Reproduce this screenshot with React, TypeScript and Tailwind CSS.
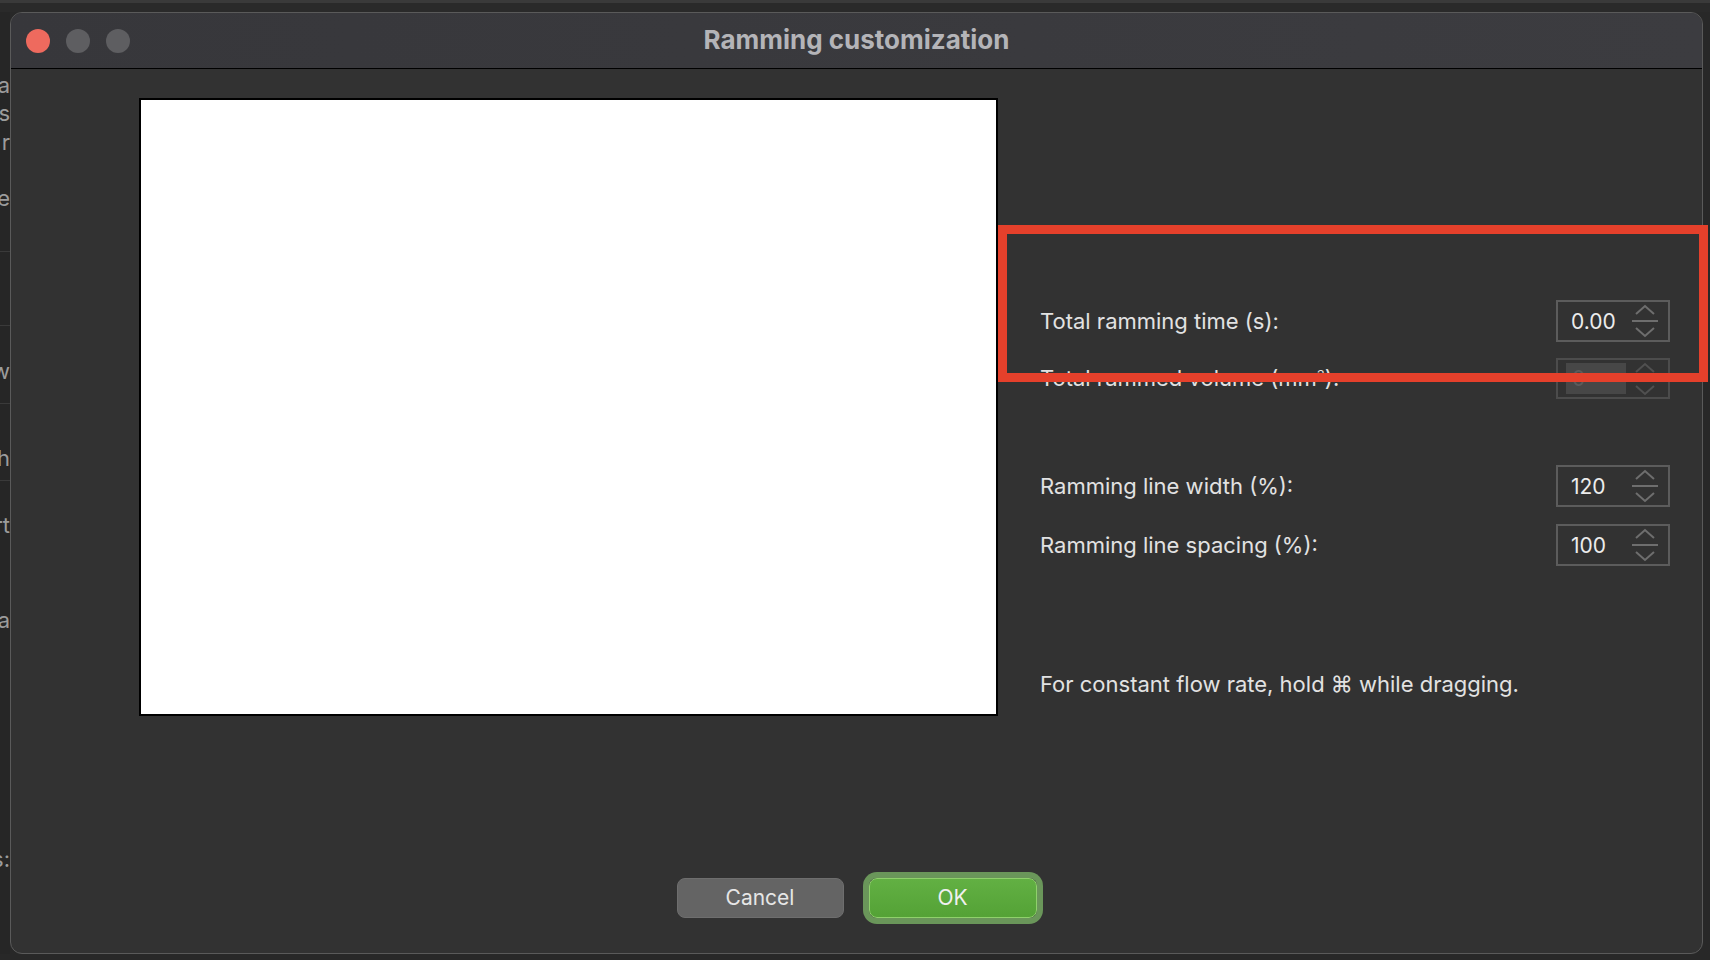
import React from 'react';

const SIDE_FRAGMENTS: { text: string; mt: string; line?: boolean }[] = [
  { text: 'a', mt: 'mt-[59px]' },
  { text: 's', mt: 'mt-0' },
  { text: 'r', mt: 'mt-[1px]' },
  { text: 'e', mt: 'mt-[28px]' },
  { text: '', mt: 'mt-[39px]', line: true },
  { text: '', mt: 'mt-[73px]', line: true },
  { text: 'w', mt: 'mt-[31px]' },
  { text: '', mt: 'mt-[18px]', line: true },
  { text: 'h', mt: 'mt-[40px]' },
  { text: '', mt: 'mt-[8px]', line: true },
  { text: 'rt', mt: 'mt-[30px]' },
  { text: 'ta', mt: 'mt-[67px]' },
  { text: 's:', mt: 'mt-[211px]' },
];

function Chevrons({ dim }: { dim?: boolean }) {
  const c = dim ? '#505050' : '#6e6e6e';
  return (
    <svg width="28" height="36" viewBox="0 0 28 36" fill="none" className="shrink-0">
      <path d="M5 11 L14 3 L23 11" stroke={c} strokeWidth="2" />
      <path d="M1 18 H27" stroke={c} strokeWidth="2" />
      <path d="M5 25 L14 33 L23 25" stroke={c} strokeWidth="2" />
    </svg>
  );
}

function SpinBox({ value, disabled }: { value: string; disabled?: boolean }) {
  if (disabled) {
    return (
      <div className="w-[114px] h-[41px] border-2 border-[#4c4c4c] flex items-center pl-[8px] pr-[9px] justify-between">
        <div className="w-[60px] h-[31px] bg-[#474747] flex items-center pl-[6px] text-[21px] text-[#5c5c5c]">{value}</div>
        <Chevrons dim />
      </div>
    );
  }
  return (
    <div className="w-[114px] h-[42px] border-2 border-[#5c5c5c] flex items-center pl-[13px] pr-[9px] justify-between">
      <span className="text-[21px] text-[#ececec] leading-none">{value}</span>
      <Chevrons />
    </div>
  );
}

function Row({ label, children, mt }: { label: React.ReactNode; children: React.ReactNode; mt: string }) {
  return (
    <div className={`flex items-center justify-between ${mt}`}>
      <span className="text-[22px] text-[#e2e2e2]">{label}</span>
      {children}
    </div>
  );
}

export default function App() {
  return (
    <div className="w-[1710px] h-[960px] bg-[#282828] relative overflow-hidden flex flex-col font-['Inter','Liberation_Sans',sans-serif]">
      {/* desktop strip above the dialog */}
      <div className="h-[12px] shrink-0 bg-[#2a2a2a] border-t-[3px] border-[#3a3a3a]" />

      <div className="flex flex-1 min-h-0">
        {/* window behind, cut off on the left */}
        <div className="w-[10px] shrink-0 bg-[#262626] overflow-hidden flex flex-col">
          {SIDE_FRAGMENTS.map((f, i) =>
            f.line ? (
              <div key={i} className={`${f.mt} h-px bg-[#3a3a3a] shrink-0`} />
            ) : (
              <div key={i} className={`${f.mt} h-[28px] shrink-0 flex justify-end`}>
                <span className="shrink-0 whitespace-nowrap text-[22px] leading-[28px] text-[#9c9c9c]">{f.text}</span>
              </div>
            )
          )}
        </div>

        {/* dialog window */}
        <div className="w-[1693px] h-[942px] shrink-0 rounded-[12px] border border-[#5a5a5a] bg-[#323232] overflow-hidden flex flex-col">
          <div className="h-[56px] shrink-0 bg-gradient-to-r from-[#37373b] to-[#3c3c40] border-b border-black grid grid-cols-[1fr_auto_1fr] items-center">
            <div className="flex items-center gap-[16px] pl-[15px]">
              <div className="w-[24px] h-[24px] rounded-full bg-[#ee6a5e]" />
              <div className="w-[24px] h-[24px] rounded-full bg-[#5e5e61]" />
              <div className="w-[24px] h-[24px] rounded-full bg-[#5e5e61]" />
            </div>
            <div className="text-[26px] font-bold text-[#b4b4b8] -mt-[3px]">Ramming customization</div>
            <div />
          </div>

          <div className="flex-1 flex flex-col">
            <div className="flex">
              <div className="ml-[128px] mt-[29px] w-[859px] h-[618px] shrink-0 bg-white border-2 border-black" />

              <div className="flex-1 pl-[42px] pr-[32px] pt-[231px] flex flex-col">
                <Row label="Total ramming time (s):" mt="mt-0">
                  <SpinBox value="0.00" />
                </Row>
                <Row label={<>Total rammed volume (mm<sup className="text-[13px]">3</sup>):</>} mt="mt-[16px]">
                  <SpinBox value="0" disabled />
                </Row>
                <Row label="Ramming line width (%):" mt="mt-[66px]">
                  <SpinBox value="120" />
                </Row>
                <Row label="Ramming line spacing (%):" mt="mt-[17px]">
                  <SpinBox value="100" />
                </Row>
                <div className="mt-[104px] text-[22px] leading-[28px] text-[#e2e2e2]">
                  For constant flow rate, hold ⌘ while dragging.
                </div>
              </div>
            </div>

            <div className="mt-[162px] flex justify-center gap-[25px]">
              <button className="w-[167px] h-[40px] rounded-[8px] bg-[#646464] border border-[#6e6e6e] text-[21px] text-[#e6e6e6]">
                Cancel
              </button>
              <button className="w-[168px] h-[40px] rounded-[8px] bg-gradient-to-b from-[#62b043] to-[#54a236] border border-[#8fd06c] ring-[6px] ring-[#6a965a] text-[21px] text-[#f0f0f0]">
                OK
              </button>
            </div>
          </div>
        </div>
      </div>

      <div className="h-[6px] shrink-0" />

      {/* annotation highlight */}
      <div className="absolute left-[998px] top-[225px] w-[710px] h-[157px] border-[9px] border-[#e5402b] pointer-events-none" />
    </div>
  );
}
